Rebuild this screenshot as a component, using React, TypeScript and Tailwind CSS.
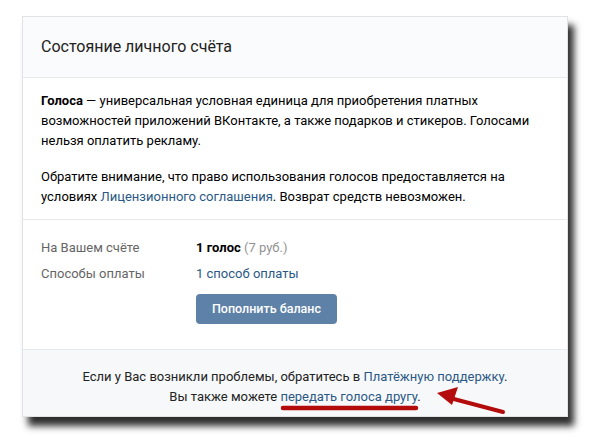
export default function App() {
  return (
    <div
      className="relative w-[591px] h-[441px] bg-white pl-[22px] pt-[16px]"
      style={{ fontFamily: "Roboto, 'Open Sans', sans-serif" }}
    >
      <div className="w-[546px] h-[401px] flex flex-col bg-white border border-[#e1e3e6] shadow-[6px_9px_7px_rgba(0,0,0,0.82)] text-[13px] leading-[20px] text-black">
        <div className="h-[61px] shrink-0 flex items-center px-[18px] bg-[#fafbfc] border-b border-[#e7e8ec] text-[16px] text-[#222]">
          Состояние личного счёта
        </div>

        <div className="px-[18px] pt-[13px] pb-[12px] border-b border-[#e7e8ec]">
          <p>
            <b className="font-bold">Голоса</b> — универсальная условная единица для приобретения платных
            <br />
            возможностей приложений ВКонтакте, а также подарков и стикеров. Голосами
            <br />
            нельзя оплатить рекламу.
          </p>
          <p className="mt-[16px]">
            Обратите внимание, что право использования голосов предоставляется на
            <br />
            условиях <span className="text-[#2a5885]">Лицензионного соглашения</span>. Возврат средств невозможен.
          </p>
        </div>

        <div className="px-[18px] pt-[18px] pb-[25px] border-b border-[#e7e8ec] flex flex-col gap-[6px]">
          <div className="flex">
            <span className="w-[155px] text-[#656565]">На Вашем счёте</span>
            <span>
              <b className="font-bold">1 голос</b> <span className="text-[#939393]">(7 руб.)</span>
            </span>
          </div>
          <div className="flex">
            <span className="w-[155px] text-[#656565]">Способы оплаты</span>
            <span className="text-[#2a5885]">1 способ оплаты</span>
          </div>
          <div className="flex mt-[4px]">
            <span className="w-[155px]" />
            <button className="w-[141px] h-[30px] rounded-[4px] bg-[#5e81a8] text-white text-[12.5px] font-medium">
              Пополнить баланс
            </button>
          </div>
        </div>

        <div className="flex-1 bg-[#f7f8fa] flex flex-col items-center justify-center pt-[8px] text-[#222]">
          <p>
            Если у Вас возникли проблемы, обратитесь в{" "}
            <span className="text-[#2a5885]">Платёжную поддержку</span>.
          </p>
          <p>
            Вы также можете <span className="text-[#2a5885]">передать голоса другу</span>.
          </p>
        </div>
      </div>

      <svg className="absolute left-0 top-0 pointer-events-none" width="591" height="441">
        <line x1="283" y1="408" x2="416" y2="408" stroke="#b40c0c" strokeWidth="4.5" strokeLinecap="round" />
        <line x1="503" y1="412" x2="450" y2="398" stroke="#b40c0c" strokeWidth="4" strokeLinecap="round" />
        <polygon points="437,393 458,387 452,405" fill="#b40c0c" />
      </svg>
    </div>
  );
}
